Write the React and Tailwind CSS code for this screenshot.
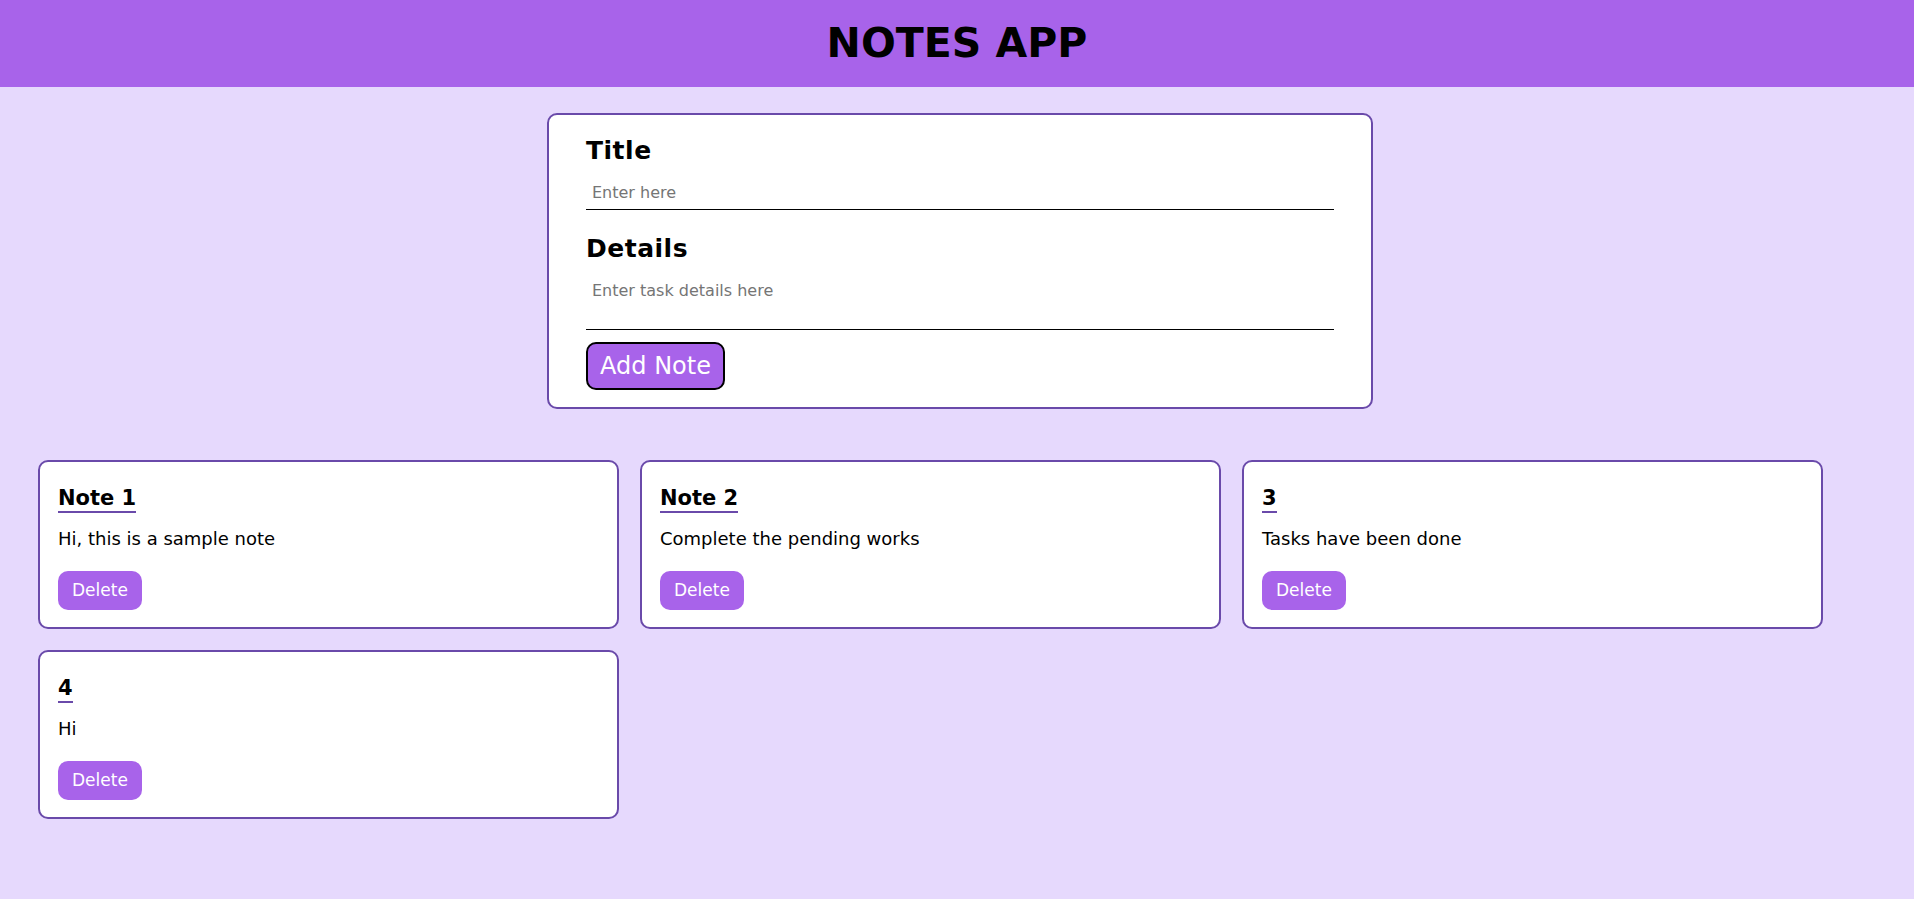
import { useState } from 'react';

const FONT = "font-['Comic_Sans_MS','DejaVu_Sans',sans-serif]";

const initialNotes = [
  { id: 1, title: 'Note 1', details: 'Hi, this is a sample note' },
  { id: 2, title: 'Note 2', details: 'Complete the pending works' },
  { id: 3, title: '3', details: 'Tasks have been done' },
  { id: 4, title: '4', details: 'Hi' },
];

export default function App() {
  const [notes, setNotes] = useState(initialNotes);
  const [title, setTitle] = useState('');
  const [details, setDetails] = useState('');

  function addNote() {
    if (!title.trim()) return;
    setNotes([...notes, { id: Date.now(), title, details }]);
    setTitle('');
    setDetails('');
  }

  return (
    <div className={`min-h-screen bg-[#e6d9fd] ${FONT} text-black`}>
      {/* Header */}
      <header className="h-[87px] bg-[#a863ea] flex items-center justify-center">
        <h1 className="text-[41px] font-bold leading-none">NOTES APP</h1>
      </header>

      {/* Form */}
      <div className="flex justify-center pl-[6px] mt-[26px]">
        <div className="w-[826px] bg-white border-2 border-[#6a4aaa] rounded-[10px] px-[37px] pt-[20px] pb-[17px]">
          <label className="block text-[25px] leading-[32px] font-bold tracking-[0.5px]">Title</label>
          <input
            value={title}
            onChange={(e) => setTitle(e.target.value)}
            placeholder="Enter here"
            className="block w-full h-[35px] mt-[8px] px-[6px] text-[16px] border-b border-black outline-none placeholder:text-[#757575]"
          />
          <label className="block mt-[23px] text-[25px] leading-[32px] font-bold tracking-[0.5px]">Details</label>
          <textarea
            value={details}
            onChange={(e) => setDetails(e.target.value)}
            placeholder="Enter task details here"
            className="block w-full h-[59px] mt-[6px] px-[6px] pt-[8px] text-[16px] leading-normal border-b border-black outline-none resize-none placeholder:text-[#757575]"
          />
          <button
            onClick={addNote}
            className="mt-[12px] w-[139px] h-[48px] bg-[#a863ea] text-white text-[24px] border-2 border-black rounded-[10px]"
          >
            Add Note
          </button>
        </div>
      </div>

      {/* Notes */}
      <div className="flex flex-wrap gap-[21px] pl-[38px] mt-[51px] pb-[40px]">
        {notes.map((n) => (
          <NoteCard
            key={n.id}
            note={n}
            onDelete={() => setNotes(notes.filter((x) => x.id !== n.id))}
          />
        ))}
      </div>
    </div>
  );
}

function NoteCard({ note, onDelete }) {
  return (
    <div className="w-[581px] bg-white border-2 border-[#6a4aaa] rounded-[10px] px-[18px] pt-[24px] pb-[17px]">
      <h3 className="inline-block text-[21px] leading-[25px] font-bold border-b-2 border-[#6a4aaa]">{note.title}</h3>
      <p className="mt-[15px] text-[18px] leading-[21px]">{note.details}</p>
      <button
        onClick={onDelete}
        className="block mt-[22px] h-[39px] px-[14px] bg-[#a863ea] text-white text-[17px] rounded-[10px]"
      >
        Delete
      </button>
    </div>
  );
}
